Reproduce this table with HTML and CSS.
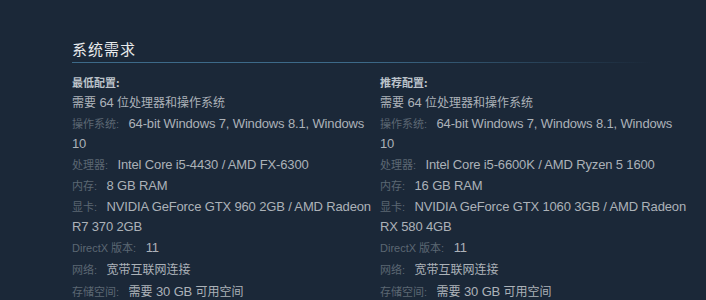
FILE: index.html
```html
<!DOCTYPE html>
<html lang="zh-CN">
<head>
<meta charset="utf-8">
<title>系统需求</title>
<link rel="stylesheet" href="styles.css">
</head>
<body>
<div class="page">
  <h2 class="title">系统需求</h2>
  <div class="cols">
    <div class="col">
      <div class="subhead">最低配置:</div>
      <ul class="reqs">
        <li><span class="zh">需要</span> 64 <span class="zh">位处理器和操作系统</span></li>
        <li><span class="label">操作系统:</span> 64-bit Windows 7, Windows 8.1, Windows 10</li>
        <li><span class="label">处理器:</span> Intel Core i5-4430 / AMD FX-6300</li>
        <li><span class="label">内存:</span> 8 GB RAM</li>
        <li><span class="label">显卡:</span> NVIDIA GeForce GTX 960 2GB / AMD Radeon R7 370 2GB</li>
        <li><span class="label">DirectX 版本:</span> 11</li>
        <li><span class="label">网络:</span> <span class="zh">宽带互联网连接</span></li>
        <li><span class="label">存储空间:</span> <span class="zh">需要</span> 30 GB <span class="zh">可用空间</span></li>
      </ul>
    </div>
    <div class="col">
      <div class="subhead">推荐配置:</div>
      <ul class="reqs">
        <li><span class="zh">需要</span> 64 <span class="zh">位处理器和操作系统</span></li>
        <li><span class="label">操作系统:</span> 64-bit Windows 7, Windows 8.1, Windows 10</li>
        <li><span class="label">处理器:</span> Intel Core i5-6600K / AMD Ryzen 5 1600</li>
        <li><span class="label">内存:</span> 16 GB RAM</li>
        <li><span class="label">显卡:</span> NVIDIA GeForce GTX 1060 3GB / AMD Radeon RX 580 4GB</li>
        <li><span class="label">DirectX 版本:</span> 11</li>
        <li><span class="label">网络:</span> <span class="zh">宽带互联网连接</span></li>
        <li><span class="label">存储空间:</span> <span class="zh">需要</span> 30 GB <span class="zh">可用空间</span></li>
      </ul>
    </div>
  </div>
</div>
</body>
</html>
```
FILE: styles.css
```css
html, body {
  margin: 0;
  padding: 0;
  background: #1b2838;
  height: 100%;
  overflow: hidden;
}
body {
  font-family: "Liberation Sans", Arial, "Noto Sans CJK SC", sans-serif;
  font-size: 13px;
  color: #acb2b8;
}
.page {
  padding: 39px 0 0 72px;
}
.title {
  margin: 0 0 11px 0;
  font-size: 15px;
  font-weight: normal;
  line-height: 20px;
  color: #e8eaec;
  font-family: "Noto Sans CJK SC", sans-serif;
  letter-spacing: 1px;
  padding: 0 0 4px 0;
  width: 580px;
  background: linear-gradient(to right, #3d6a89 0%, #3d6a89 50%, rgba(61,106,137,0) 100%) no-repeat left bottom / 100% 1px;
}
.cols {
  display: grid;
  grid-template-columns: 308px 308px;
  column-gap: 0;
}
.subhead {
  font-family: "Noto Sans CJK SC", sans-serif;
  font-size: 11px;
  line-height: 16px;
  font-weight: bold;
  color: #bcc3ca;
  margin-bottom: 2px;
}
.reqs {
  list-style: none;
  margin: 0;
  padding: 0;
}
.reqs li {
  line-height: 20px;
  margin-bottom: 1px;
  letter-spacing: -0.15px;
}
.zh {
  font-family: "Noto Sans CJK SC", sans-serif;
  font-size: 12px;
  letter-spacing: 0;
}
.label {
  font-family: "Liberation Sans", "Noto Sans CJK SC", sans-serif;
  font-size: 11px;
  letter-spacing: 0;
  color: #5c6773;
  margin-right: 6px;
}
```
